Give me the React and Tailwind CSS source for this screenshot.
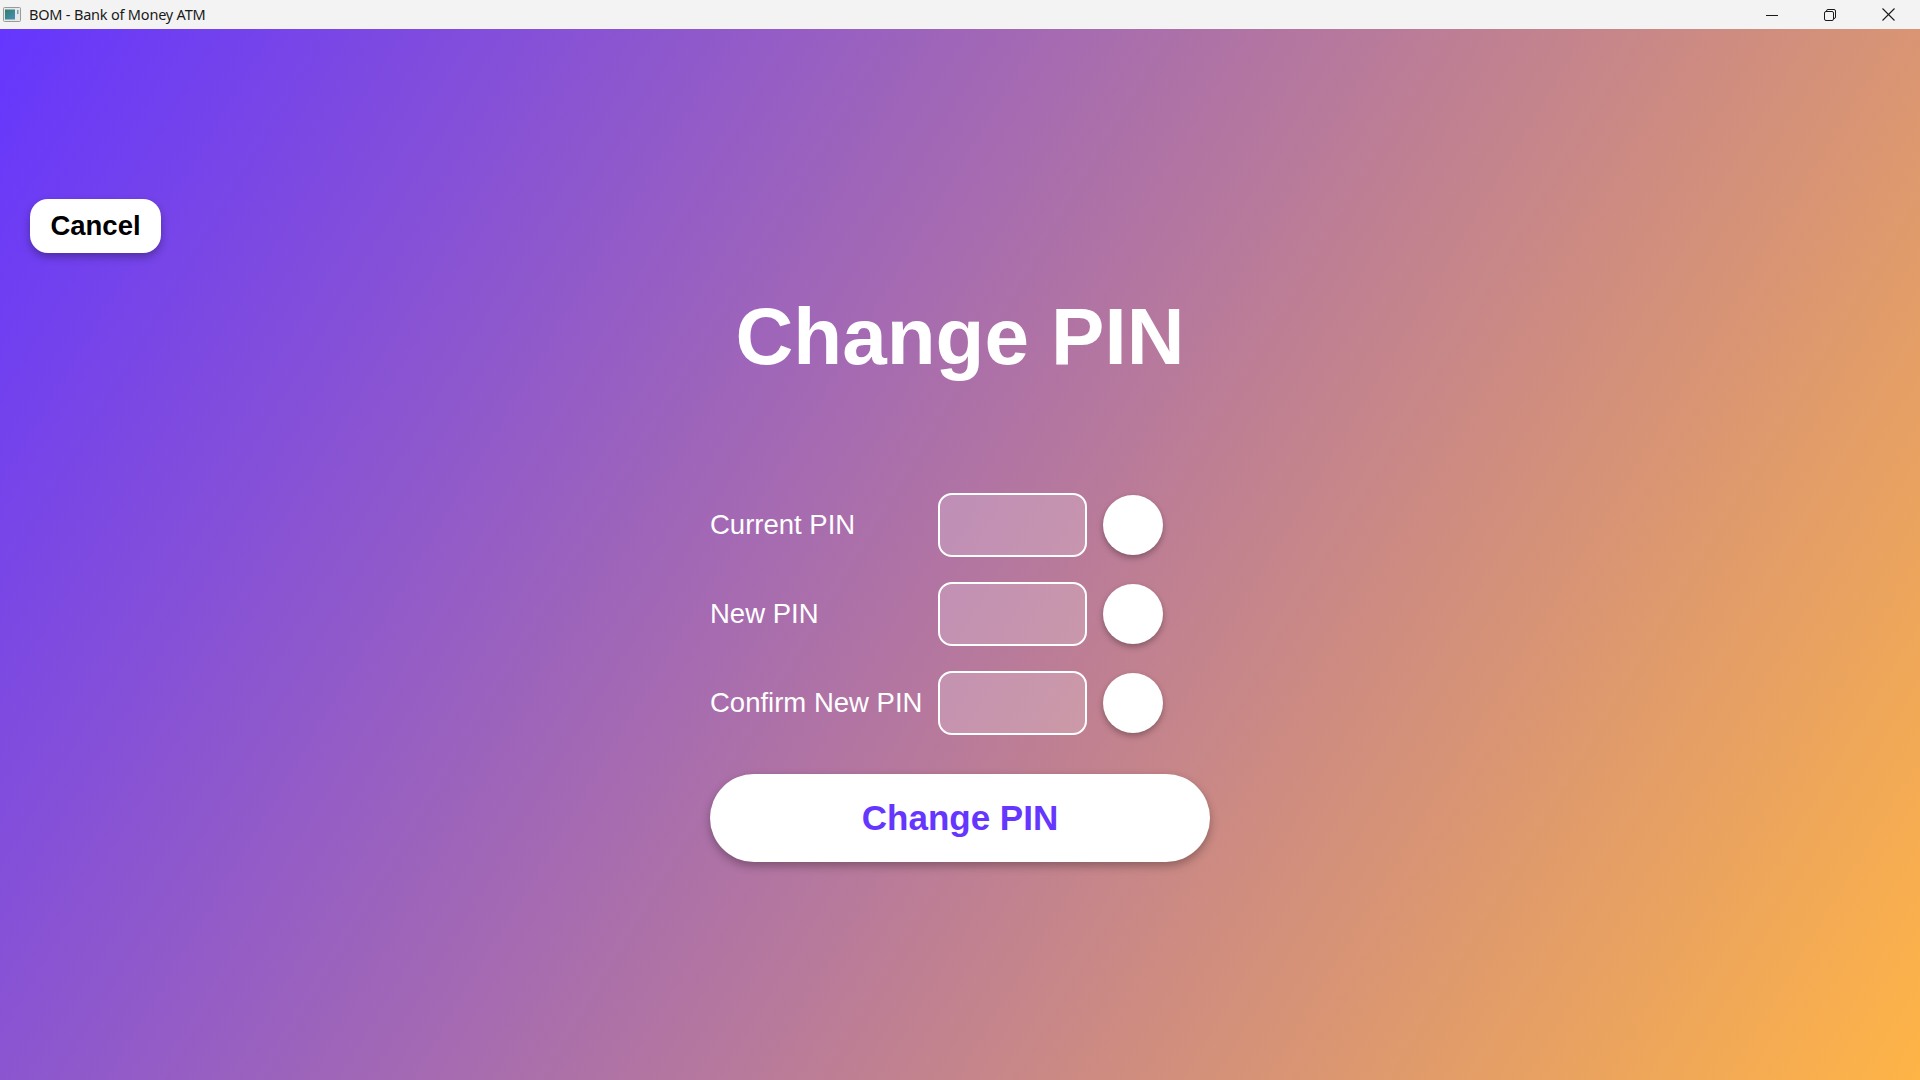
import React from 'react';

const AppIcon = () => (
    <svg width="18" height="15" viewBox="0 0 18 15">
        <defs>
            <linearGradient id="ico" x1="0" y1="0" x2="1" y2="1">
                <stop offset="0" stopColor="#2f7d6a" />
                <stop offset="1" stopColor="#4a90b8" />
            </linearGradient>
        </defs>
        <rect x="0.5" y="0.5" width="17" height="14" rx="1" fill="#e8e8e8" stroke="#9a9a9a" />
        <rect x="2" y="2.5" width="10" height="10" fill="url(#ico)" />
        <rect x="14" y="3" width="1.5" height="4" fill="#6fa0c0" />
    </svg>
);

const TitleBar = () => (
    <div className="h-[29px] bg-[#f3f3f3] flex items-center justify-between select-none">
        <div className="flex items-center pl-[3px] gap-[8px]">
            <AppIcon />
            <span className="text-[14.5px] text-[#1a1a1a] font-['Noto_Sans',sans-serif] leading-none tracking-[-0.2px]">BOM - Bank of Money ATM</span>
        </div>
        <div className="flex items-center h-full pr-[3px]">
            <div className="w-[58px] h-full flex items-center justify-center">
                <svg width="12" height="12" viewBox="0 0 12 12">
                    <line x1="0" y1="6.5" x2="12" y2="6.5" stroke="#1a1a1a" strokeWidth="1" />
                </svg>
            </div>
            <div className="w-[58px] h-full flex items-center justify-center">
                <svg width="12" height="12" viewBox="0 0 12 12" fill="none" stroke="#1a1a1a" strokeWidth="1">
                    <rect x="0.5" y="2.5" width="9" height="9" rx="1.5" />
                    <path d="M2.5 2.5 V2 a1.5 1.5 0 0 1 1.5 -1.5 H10 a1.5 1.5 0 0 1 1.5 1.5 V8 a1.5 1.5 0 0 1 -1.5 1.5 H9.5" />
                </svg>
            </div>
            <div className="w-[58px] h-full flex items-center justify-center">
                <svg width="13" height="13" viewBox="0 0 13 13" stroke="#1a1a1a" strokeWidth="1.1">
                    <line x1="0.5" y1="0.5" x2="12.5" y2="12.5" />
                    <line x1="12.5" y1="0.5" x2="0.5" y2="12.5" />
                </svg>
            </div>
        </div>
    </div>
);

const fields = ['Current PIN', 'New PIN', 'Confirm New PIN'];

export default function App() {
    return (
        <div className="w-[1920px] h-[1080px] flex flex-col overflow-hidden font-['Liberation_Sans',Arial,sans-serif]">
            <TitleBar />
            <div className="flex-1 flex flex-col bg-[linear-gradient(121deg,#6536fe,#ffb446)] pt-[170px]">
                <div className="pl-[30px]">
                    <button className="h-[54px] w-[131px] bg-white rounded-[18px] text-[27.5px] font-bold text-black shadow-[0_4px_8px_rgba(0,0,0,0.3)]">
                        Cancel
                    </button>
                </div>

                <h1 className="mt-[44px] text-center text-white text-[80px] font-bold leading-[80px]">
                    Change PIN
                </h1>

                <div className="mt-[116px] w-[500px] mx-auto">
                    <div className="grid grid-cols-[212px_149px_60px] gap-x-4 gap-y-[25px] items-center justify-start">
                        {fields.map(label => (
                            <React.Fragment key={label}>
                                <label className="text-white text-[27.5px] leading-none whitespace-nowrap">{label}</label>
                                <div className="h-[64px] rounded-[14px] border-2 border-white bg-white/20"></div>
                                <div className="w-[60px] h-[60px] rounded-full bg-white shadow-[0_3px_6px_rgba(0,0,0,0.3)]"></div>
                            </React.Fragment>
                        ))}
                    </div>

                    <button className="mt-[39px] w-[500px] h-[88px] bg-white rounded-[44px] text-[35px] font-bold text-[#6536fe] shadow-[0_4px_10px_rgba(0,0,0,0.3)]">
                        Change PIN
                    </button>
                </div>
            </div>
        </div>
    );
}
